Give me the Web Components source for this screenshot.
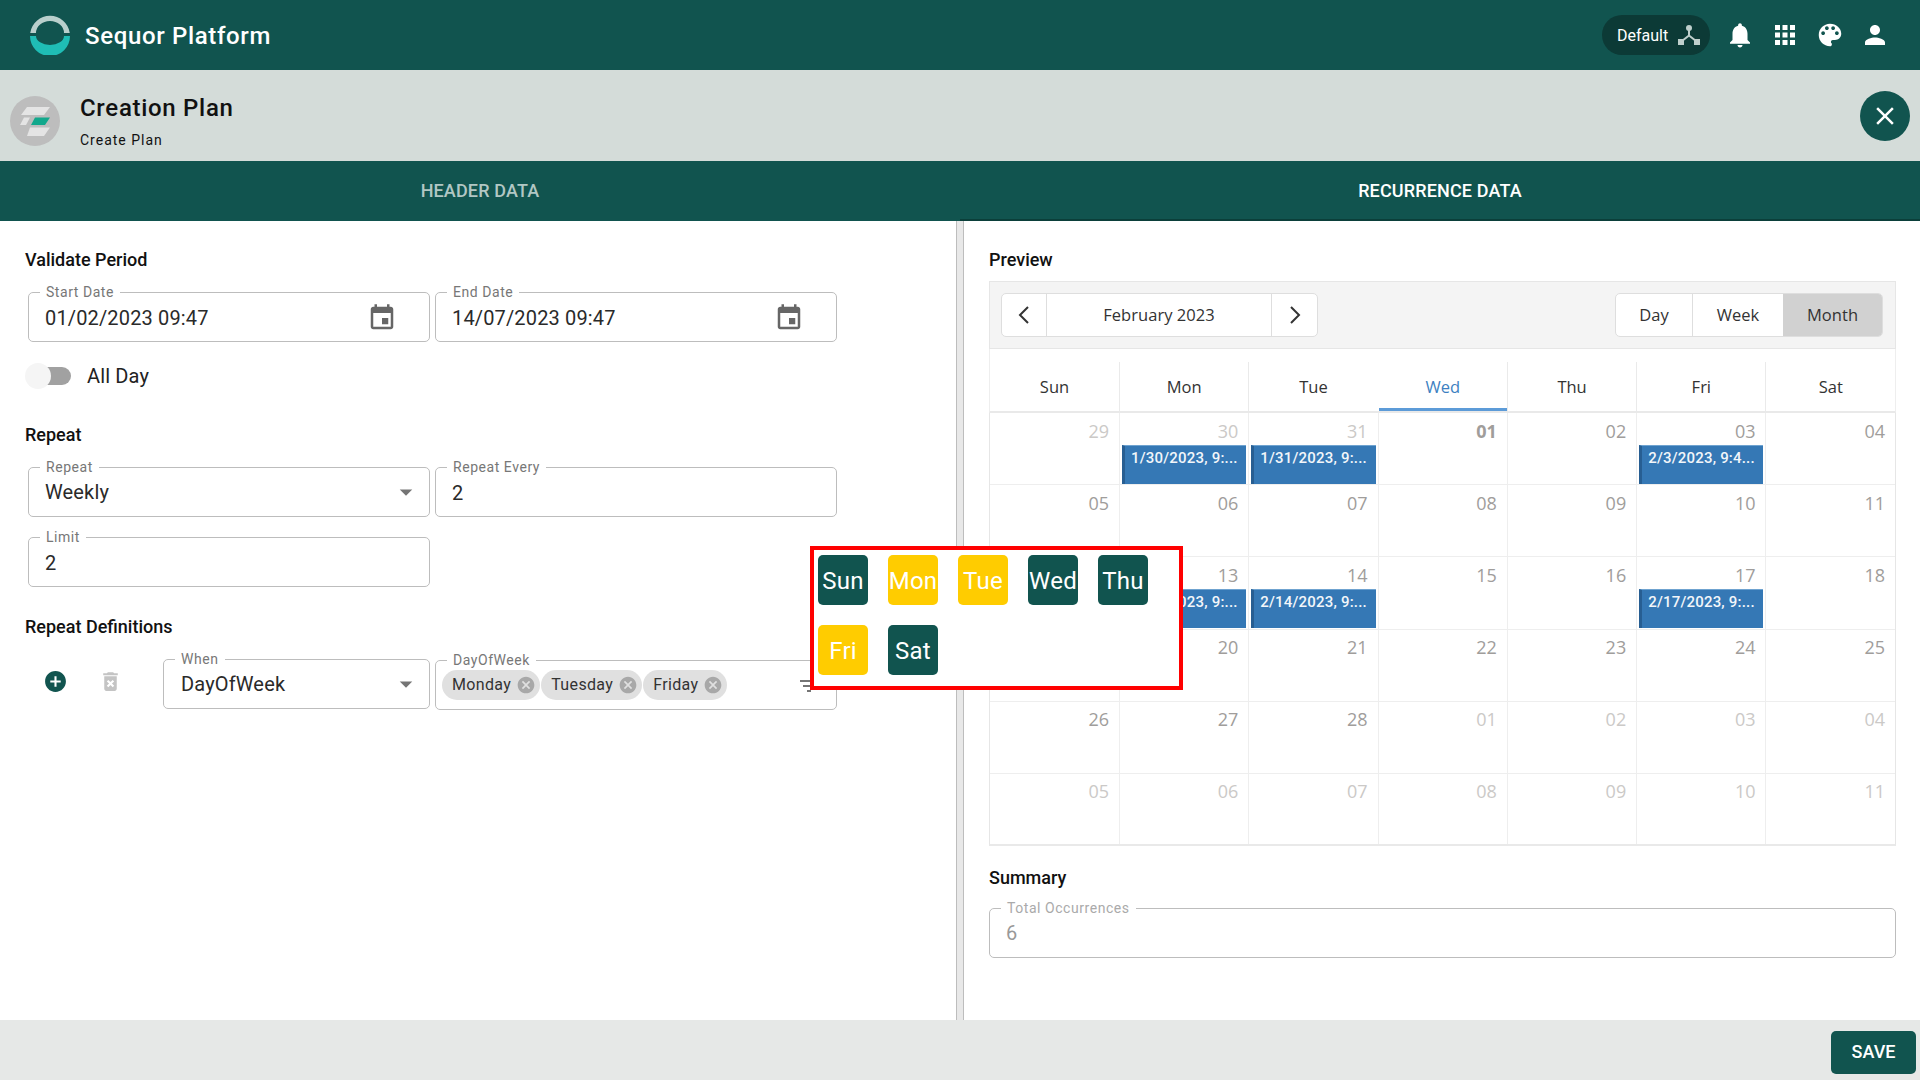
<!DOCTYPE html>
<html lang="en"><head><meta charset="utf-8"><title>Creation Plan</title>
<style>
html,body{margin:0;padding:0;background:#fff}
body{font-family:Roboto,"Liberation Sans",sans-serif;width:1920px;height:1080px;overflow:hidden}
</style></head><body>
<sq-app></sq-app>
<script>
const P={
 event:'M17 12h-5v5h5v-5zM16 1v2H8V1H6v2H5c-1.11 0-1.99.9-1.99 2L3 19c0 1.1.89 2 2 2h14c1.1 0 2-.9 2-2V5c0-1.1-.9-2-2-2h-1V1h-2zm3 18H5V8h14v11z',
 bell:'M12 22c1.1 0 2-.9 2-2h-4c0 1.1.89 2 2 2zm6-6v-5c0-3.07-1.64-5.64-4.5-6.32V4c0-.83-.67-1.5-1.5-1.5s-1.5.67-1.5 1.5v.68C7.63 5.36 6 7.92 6 11v5l-2 2v1h16v-1l-2-2z',
 apps:'M4 8h4V4H4v4zm6 12h4v-4h-4v4zm-6 0h4v-4H4v4zm0-6h4v-4H4v4zm6 0h4v-4h-4v4zm6-10v4h4V4h-4zm-6 4h4V4h-4v4zm6 6h4v-4h-4v4zm0 6h4v-4h-4v4z',
 palette:'M12 3c-4.97 0-9 4.03-9 9s4.03 9 9 9c.83 0 1.5-.67 1.5-1.5 0-.39-.15-.74-.39-1.01-.23-.26-.38-.61-.38-.99 0-.83.67-1.5 1.5-1.5H16c2.76 0 5-2.24 5-5 0-4.42-4.03-8-9-8zm-5.5 9c-.83 0-1.5-.67-1.5-1.5S5.67 9 6.5 9 8 9.67 8 10.5 7.33 12 6.5 12zm3-4C8.67 8 8 7.33 8 6.5S8.67 5 9.5 5s1.5.67 1.5 1.5S10.33 8 9.5 8zm5 0c-.83 0-1.5-.67-1.5-1.5S13.67 5 14.5 5s1.5.67 1.5 1.5S15.33 8 14.5 8zm3 4c-.83 0-1.5-.67-1.5-1.5S16.67 9 17.5 9s1.5.67 1.5 1.5-.67 1.5-1.5 1.5z',
 person:'M12 12c2.21 0 4-1.79 4-4s-1.79-4-4-4-4 1.79-4 4 1.79 4 4 4zm0 2c-2.67 0-8 1.34-8 4v2h16v-2c0-2.66-5.33-4-8-4z',
 close:'M19 6.41L17.59 5 12 10.59 6.41 5 5 6.41 10.59 12 5 17.59 6.41 19 12 13.41 17.59 19 19 17.59 13.41 12z',
 add:'M12 2C6.48 2 2 6.48 2 12s4.48 10 10 10 10-4.48 10-10S17.52 2 12 2zm5 11h-4v4h-2v-4H7v-2h4V7h2v4h4v2z',
 trash:'M6 19c0 1.1.9 2 2 2h8c1.1 0 2-.9 2-2V7H6v12zm2.46-7.12l1.41-1.41L12 12.59l2.12-2.12 1.41 1.41L13.41 14l2.12 2.12-1.41 1.41L12 15.41l-2.12 2.12-1.41-1.41L10.59 14l-2.13-2.12zM15.5 4l-1-1h-5l-1 1H5v2h14V4z',
 cancel:'M12 2C6.47 2 2 6.47 2 12s4.47 10 10 10 10-4.47 10-10S17.53 2 12 2zm5 13.59L15.59 17 12 13.41 8.41 17 7 15.59 10.59 12 7 8.41 8.41 7 12 10.59 15.59 7 17 8.41 13.41 12 17 15.59z',
 filter:'M10 18h4v-2h-4v2zM3 6v2h18V6H3zm3 7h12v-2H6v2z',
 down:'M7 10l5 5 5-5z'
};
const def=(n,c)=>customElements.define(n,c);
class Base extends HTMLElement{
 constructor(){super();this.attachShadow({mode:'open'});}
 connectedCallback(){if(!this._r){this._r=1;this.shadowRoot.innerHTML=this.html();}}
}
def('sq-icon',class extends Base{html(){
 const s=this.getAttribute('size')||24,c=this.getAttribute('color')||'currentColor';
 return `<style>:host{display:inline-flex;flex:none;line-height:0}</style><svg width="${s}" height="${s}" viewBox="0 0 24 24" fill="${c}"><path d="${P[this.getAttribute('name')]}"/></svg>`;
}});
def('sq-topbar',class extends Base{html(){return `<style>
:host{display:flex;align-items:center;height:70px;background:#11544f;color:#fff;padding:0 30px 0 30px;box-sizing:border-box}
.t{font-size:24px;font-weight:500;margin-left:15px;letter-spacing:.65px;position:relative;top:1px}
.sp{flex:1}
.pill{display:flex;align-items:center;width:108px;height:40px;box-sizing:border-box;padding-left:15px;border-radius:20px;background:#0c3a36;font-size:16px;margin-right:15px}
.pill svg{margin-left:10px}
.ic{display:flex;gap:15px}
</style><svg width="40" height="40" viewBox="0 0 40 40"><path fill="#b9cfcc" d="M.2 18A20 20 0 0 1 39.8 18L34 18A14 12 0 0 0 6 18Z"/><path fill="#1fbdb5" d="M0 21A20 20 0 0 0 40 21L34 21A14 9 0 0 1 6 21Z"/></svg>
<span class="t">Sequor Platform</span><span class="sp"></span>
<div class="pill"><span>Default</span><svg width="22" height="22" viewBox="0 0 22 22"><g fill="#bfcfcc"><circle cx="11" cy="4" r="3"/><rect x="0" y="15" width="6" height="6"/><rect x="16" y="15" width="6" height="6"/></g><path d="M11 5v7M11 11.5L4 17M11 11.5L18 17" stroke="#bfcfcc" stroke-width="2" fill="none"/></svg></div>
<div class="ic"><sq-icon name="bell" size="30"></sq-icon><sq-icon name="apps" size="30"></sq-icon><sq-icon name="palette" size="30"></sq-icon><sq-icon name="person" size="30"></sq-icon></div>`}});
def('sq-pagehead',class extends Base{html(){return `<style>
:host{display:flex;align-items:center;height:91px;background:#d4dcd9;padding:0 10px;box-sizing:border-box;color:#111}
.tx{margin-left:20px;flex:1;margin-top:10px}
.a{font-size:24px;font-weight:500;line-height:30px;letter-spacing:.7px}
.b{font-size:14px;line-height:18px;margin-top:8px;letter-spacing:1px}
.x{width:50px;height:50px;border-radius:50%;background:#11544f;color:#fff;display:flex;align-items:center;justify-content:center}
</style><svg width="50" height="50" viewBox="0 0 50 50" style="margin-top:10px"><circle cx="25" cy="25" r="25" fill="#bdbdbd"/><g fill="#e4e4e4"><polygon points="17,11 40,11 34,19 11,19"/><polygon points="14,21.5 20,21.5 16,29 10,29"/><polygon points="20,31.5 40,31.5 34,40 17,40"/></g><polygon fill="#12a88c" points="25,21.5 40,21.5 35,29 21,29"/></svg>
<div class="tx"><div class="a">Creation Plan</div><div class="b">Create Plan</div></div>
<div class="x"><sq-icon name="close" size="30"></sq-icon></div>`}});
def('sq-tabs',class extends Base{html(){return `<style>
:host{display:grid;grid-template-columns:1fr 1fr;height:60px;background:#11544f;font-size:18px;font-weight:500;box-sizing:border-box}
div{display:flex;align-items:center;justify-content:center;color:#b1c7c4;letter-spacing:.15px;padding-bottom:2px;box-sizing:border-box}
.on{color:#fff;box-shadow:inset 0 -2px 0 #0b3f3a}
</style><div>HEADER DATA</div><div class="on">RECURRENCE DATA</div>`}});
def('sq-h',class extends Base{html(){return `<style>:host{display:block;font-size:18px;font-weight:500;line-height:20px;color:#111}</style><slot></slot>`}});
def('sq-field',class extends Base{html(){
 const d=this.hasAttribute('disabled');
 const lift=+(this.getAttribute('lift')||0);
 return `<style>
:host{display:block;width:402px;flex:none;box-sizing:border-box}
fieldset{margin:0;padding:0 16px;border:1px solid #bdbdbd;border-radius:5px;height:58px;box-sizing:border-box;min-width:0;display:block}
legend{font-size:14px;line-height:16px;color:${d?'#aaa':'#777'};padding:0 6px;margin-left:-5px;letter-spacing:.55px}
.r{display:flex;align-items:center;height:${36-lift}px;margin-bottom:${lift}px;font-size:20px;color:${d?'#999':'#2a2a2a'};letter-spacing:.15px}
.v{flex:1;min-width:0;display:flex;align-items:center}
</style><fieldset><legend>${this.getAttribute('label')}</legend><div class="r"><div class="v"><slot></slot></div><slot name="end"></slot></div></fieldset>`}});
def('sq-chip',class extends Base{html(){return `<style>
:host{display:inline-flex;align-items:center;height:30px;border-radius:15px;background:#e0e0e0;font-size:16px;letter-spacing:.35px;color:#333;padding:0 4px 0 10px;gap:5px;box-sizing:border-box}
</style><slot></slot><sq-icon name="cancel" size="20" color="#a8a8a8"></sq-icon>`}});
def('sq-toggle',class extends Base{html(){return `<style>
:host{display:flex;align-items:center;height:24px;font-size:20px;color:#222;letter-spacing:.15px}
.w{position:relative;width:46px;height:26px;display:flex;align-items:center;margin-right:16px}
.tr{margin-left:13px;width:33px;height:18px;border-radius:9px;background:#a1a1a1}
.th{position:absolute;left:0;top:0;width:26px;height:26px;border-radius:50%;background:#f5f5f5}
</style><span class="w"><span class="tr"></span><span class="th"></span></span><slot></slot>`}});
def('sq-calendar',class extends Base{html(){
 const names=['Sun','Mon','Tue','Wed','Thu','Fri','Sat'];
 const days=[];
 for(const d of [29,30,31])days.push([d,'o']);
 for(let d=1;d<=28;d++)days.push([String(d).padStart(2,'0'),d==1?'b':'']);
 for(let d=1;d<=11;d++)days.push([String(d).padStart(2,'0'),'o']);
 const ev={30:'1/30/2023, 9:...',31:'1/31/2023, 9:...','03':'2/3/2023, 9:4...',13:'2/13/2023, 9:...',14:'2/14/2023, 9:...',17:'2/17/2023, 9:...'};
 const cols='129px repeat(5,129.3px) 1fr';
 return `<style>
:host{display:block;width:907px;font-family:"Open Sans","Noto Sans",sans-serif;color:#333;box-sizing:border-box}
.tb{display:flex;justify-content:space-between;align-items:flex-start;height:68px;box-sizing:border-box;padding:11px 12px 0 11px;background:#f4f4f4;border:1px solid #e6e6e6}
.grp{display:flex;height:44px;box-sizing:border-box;border:1px solid #dedede;border-radius:5px;background:#fff;font-size:16.5px;overflow:hidden;letter-spacing:.05px}
.grp>div{display:flex;align-items:center;justify-content:center;box-sizing:border-box;border-left:1px solid #dedede;padding-bottom:1px}
.grp>div:first-child{border-left:0}
.on{background:#d1d1d1}
.hd{display:grid;grid-template-columns:${cols};height:64px;padding-top:13px;box-sizing:border-box;border-left:1px solid #eee;border-right:1px solid #eee;border-bottom:2px solid #e9e9e9;font-size:16.5px}
.hd div{display:flex;align-items:center;justify-content:center;border-left:1px solid #eaeaea;box-sizing:border-box}
.hd div:first-child{border-left:0}
.hd .w{color:#3d7fc1;border-bottom:3px solid #5c9bd8;padding-top:3px;margin-left:1px;border-left:0}
.gr{display:grid;grid-template-columns:${cols};grid-template-rows:repeat(5,72.2px) 70.5px;border-left:1px solid #e6e6e6;border-right:1px solid #e6e6e6;border-bottom:2px solid #e9e9e9}
.c{border-left:1px solid #eee;border-bottom:1px solid #eee;box-sizing:border-box;padding-top:3.5px;min-width:0;overflow:hidden}
.c:nth-child(7n+1){border-left:0}
.c:nth-last-child(-n+7){border-bottom:0}
.n{font-size:18px;line-height:28px;height:28.5px;text-align:right;padding-right:10px;color:#a09d9b}
.o .n{color:#cbc9c7}
.b .n{font-weight:700}
.e{margin:0 2px;height:39px;box-sizing:border-box;background:#3578b5;border-left:3px solid #275e92;border-top:1px solid #6fa3d0;color:#f2f6fa;font:500 15px/20px Roboto,sans-serif;padding:2px 0 0 6px;letter-spacing:.2px;white-space:nowrap;overflow:hidden}
</style>
<div class="tb">
 <div class="grp"><div style="width:44px"><svg width="14" height="20" viewBox="0 0 14 20" fill="none" stroke="#333" stroke-width="2"><path d="M11 2L3 10l8 8"/></svg></div><div style="width:225px">February 2023</div><div style="width:46px"><svg width="14" height="20" viewBox="0 0 14 20" fill="none" stroke="#333" stroke-width="2"><path d="M3 2l8 8-8 8"/></svg></div></div>
 <div class="grp"><div style="width:76px">Day</div><div style="width:91px">Week</div><div class="on" style="width:99px;border-left:0">Month</div></div>
</div>
<div class="hd">${names.map((n,i)=>`<div class="${i==3?'w':''}">${n}</div>`).join('')}</div>
<div class="gr">${days.map(([d,k])=>`<div class="c ${k}"><div class="n">${d}</div>${ev[d]&&(k==='o'?(d==30||d==31):true)?`<div class="e">${ev[d]}</div>`:''}</div>`).join('')}</div>`}});
def('sq-daypicker',class extends Base{html(){
 const y=['Mon','Tue','Fri'];
 return `<style>
:host{position:absolute;left:810px;top:546px;width:373px;height:144px;box-sizing:border-box;border:4px solid #ff0000;background:#fff;padding:5px 0 0 4px}
.g{display:grid;grid-template-columns:repeat(5,50px);grid-auto-rows:50px;gap:20px}
.d{display:flex;align-items:center;justify-content:center;border-radius:5px;background:#11544f;color:#fff;font-size:24px;letter-spacing:.2px;white-space:nowrap;padding-top:1px;box-sizing:border-box}
.y{background:#ffcc00}
</style><div class="g">${['Sun','Mon','Tue','Wed','Thu','Fri','Sat'].map(d=>`<div class="d ${y.includes(d)?'y':''}">${d}</div>`).join('')}</div>`}});
def('sq-left',class extends Base{html(){return `<style>
:host{display:block;padding:29px 0 0 25px;box-sizing:border-box;min-width:0;overflow:hidden}
.row{display:flex;gap:5px;margin:14px 0 0 3px}
.row.def{align-items:flex-start;margin-top:14px;margin-left:0}
sq-toggle{margin-top:22px}
.ic{display:flex;align-items:center;width:133px;padding-top:18px;box-sizing:border-box}
.ic sq-icon:first-child{margin-left:18px;margin-right:30px}
.chips{display:flex;gap:1px;margin-left:-10px;margin-top:-3px}
.in{margin-left:1px}
</style>
<sq-h>Validate Period</sq-h>
<div class="row"><sq-field label="Start Date">01/02/2023 09:47<sq-icon slot="end" name="event" size="30" color="#666" style="margin-right:16px"></sq-icon></sq-field><sq-field label="End Date">14/07/2023 09:47<sq-icon slot="end" name="event" size="30" color="#666" style="margin-right:16px"></sq-icon></sq-field></div>
<sq-toggle>All Day</sq-toggle>
<sq-h style="margin-top:37px">Repeat</sq-h>
<div class="row" style="margin-top:14px"><sq-field label="Repeat" lift="3">Weekly<sq-icon slot="end" name="down" size="30" color="#757575" style="margin-right:-8px"></sq-icon></sq-field><sq-field label="Repeat Every">2</sq-field></div>
<div class="row" style="margin-top:12px"><sq-field label="Limit">2</sq-field></div>
<sq-h style="margin-top:30px">Repeat Definitions</sq-h>
<div class="row def"><div class="ic"><sq-icon name="add" size="25" color="#11544f"></sq-icon><sq-icon name="trash" size="25" color="#c4c4c4"></sq-icon></div>
<sq-field label="When" lift="2" style="width:267px"><span class="in">DayOfWeek</span><sq-icon slot="end" name="down" size="30" color="#757575" style="margin-right:-8px"></sq-icon></sq-field>
<sq-field label="DayOfWeek" style="margin-top:1px"><div class="chips"><sq-chip>Monday</sq-chip><sq-chip>Tuesday</sq-chip><sq-chip>Friday</sq-chip></div><sq-icon slot="end" name="filter" size="24" color="#757575" style="margin-right:-1px"></sq-icon></sq-field></div>`}});
def('sq-right',class extends Base{html(){return `<style>
:host{display:block;padding:29px 0 0 25px;box-sizing:border-box;min-width:0;overflow:hidden}
sq-calendar{margin-top:11px}
</style>
<sq-h>Preview</sq-h>
<sq-calendar></sq-calendar>
<sq-h style="margin-top:22px">Summary</sq-h>
<sq-field label="Total Occurrences" disabled lift="2" style="width:907px;margin-top:12px">6</sq-field>`}});
def('sq-footer',class extends Base{html(){return `<style>
:host{display:flex;justify-content:flex-end;align-items:flex-start;height:60px;background:#e6e8e7;padding:11px 4px 0 0;box-sizing:border-box}
div{width:85px;height:43px;border-radius:5px;background:#11544f;color:#fff;font-size:18px;font-weight:500;display:flex;align-items:center;justify-content:center;padding-bottom:2px;box-sizing:border-box}
</style><div>SAVE</div>`}});
def('sq-app',class extends Base{html(){return `<style>
:host{display:flex;flex-direction:column;position:relative;width:1920px;height:1080px;overflow:hidden}
.m{flex:1;display:grid;grid-template-columns:956px 8px 956px;min-height:0}
.s{background:#e8e8e8;border-left:1px solid #bdbdbd;border-right:1px solid #bdbdbd}
</style><sq-topbar></sq-topbar><sq-pagehead></sq-pagehead><sq-tabs></sq-tabs>
<div class="m"><sq-left></sq-left><div class="s"></div><sq-right></sq-right></div><sq-footer></sq-footer><sq-daypicker></sq-daypicker>`}});
</script></body></html>
